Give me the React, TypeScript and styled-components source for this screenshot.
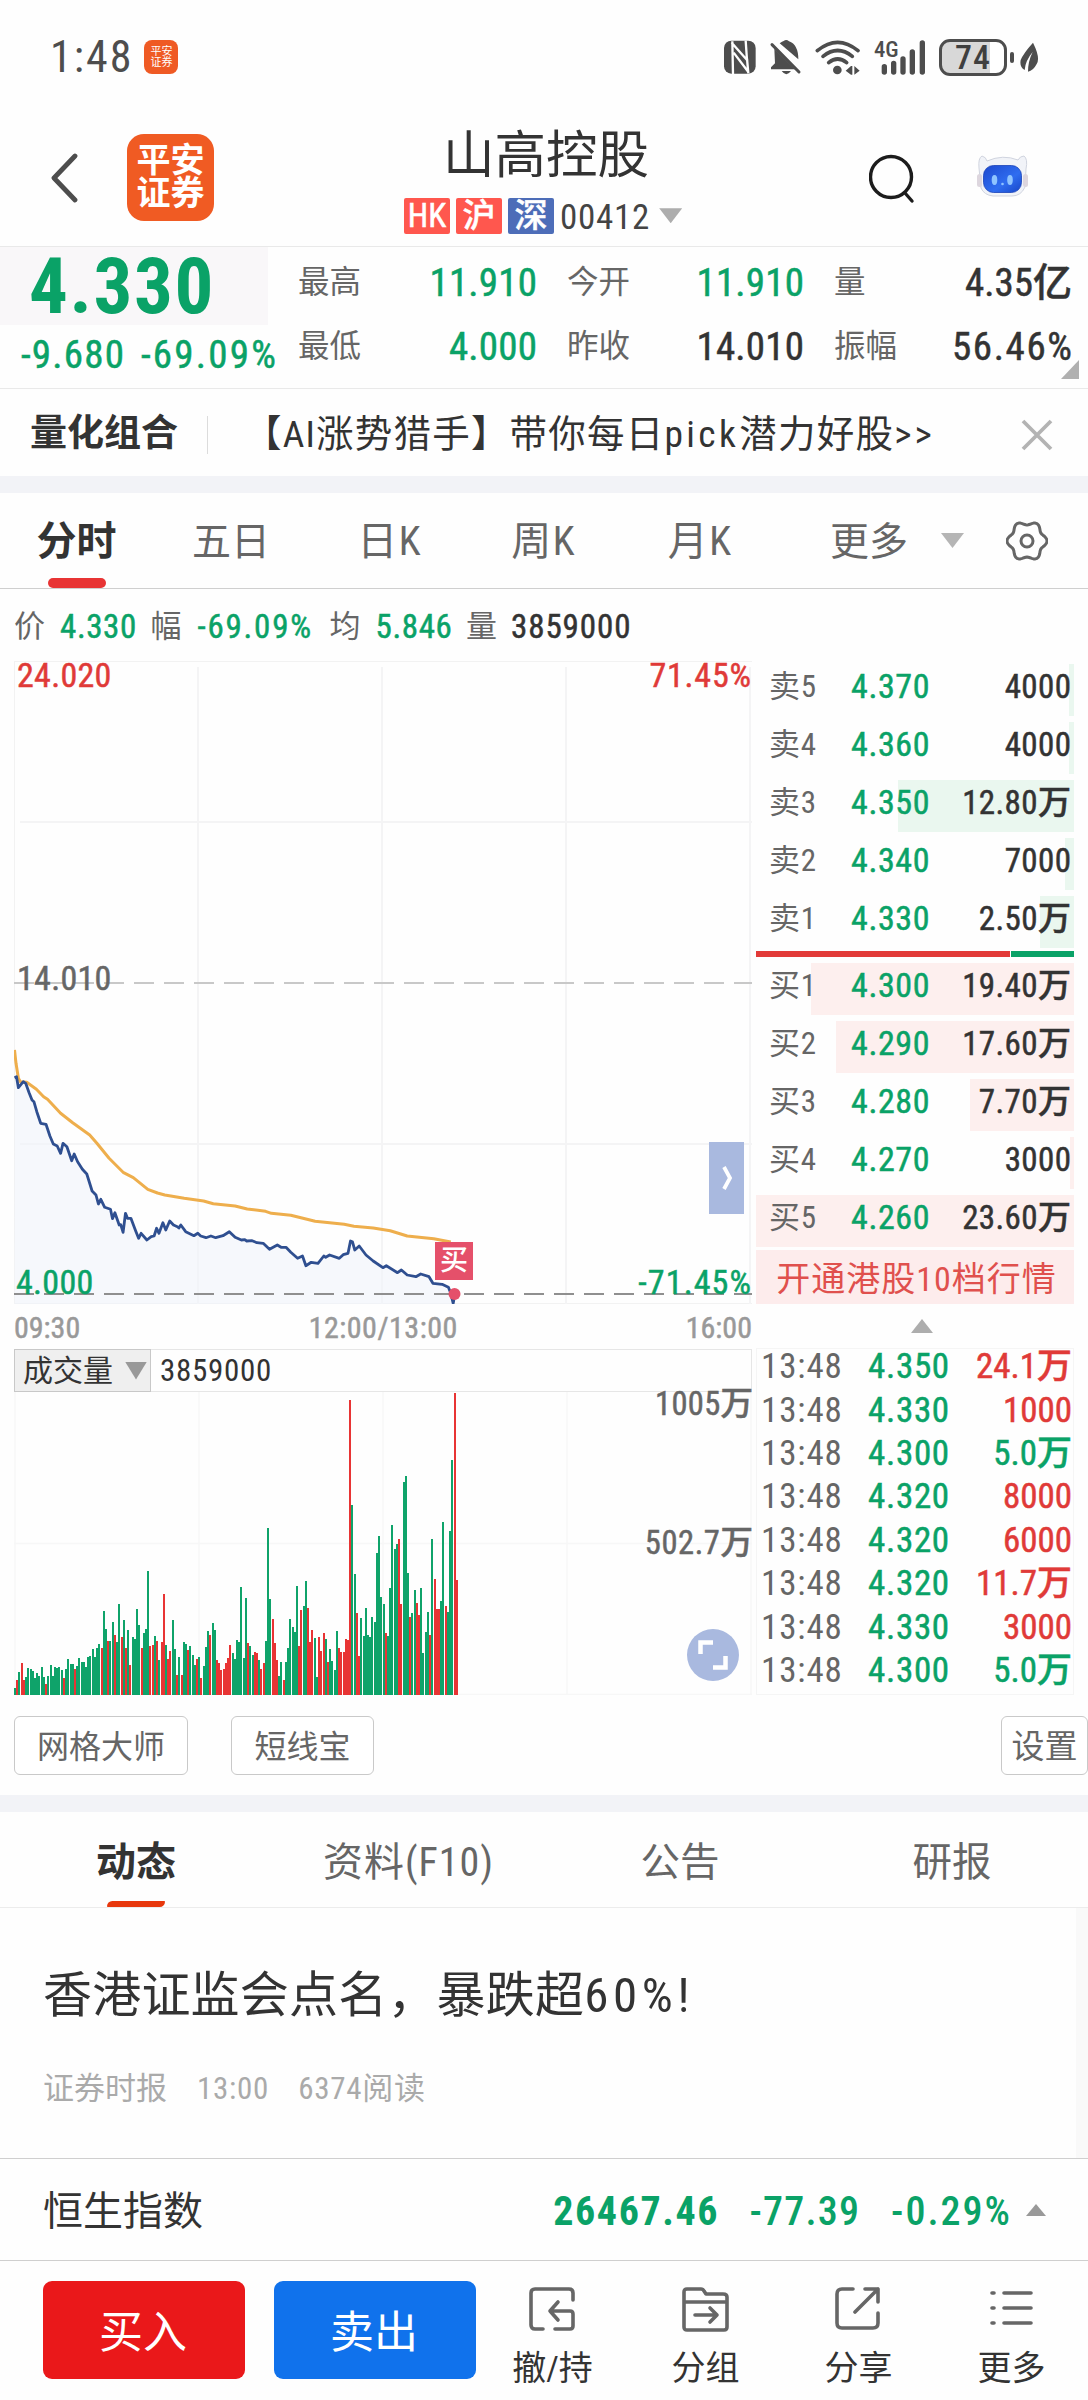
import React from 'react';
import styled, { createGlobalStyle } from 'styled-components';

const GREEN = '#0aa267';
const RED = '#e03a38';
const INK = '#333';
const GREY = '#666';

const GlobalStyle = createGlobalStyle`
  *, *::before, *::after { box-sizing: border-box; }
  body {
    margin: 0;
    background: #fff;
    color: ${INK};
    font-family: "Roboto Condensed", Roboto, "Noto Sans CJK SC", sans-serif;
    font-stretch: 75%;
  }
`;

const Screen = styled.main`
  display: flex;
  flex-direction: column;
  width: 1088px;
  height: 2400px;
  overflow: hidden;
  background: #fefefe;
`;

const Text = styled.span<{ $size: number; $color?: string; $weight?: number; $ls?: number; $w?: number; $ml?: string; $drop?: number }>`
  display: inline-block;
  flex: none;
  font-size: ${p => p.$size}px;
  line-height: 1.2;
  color: ${p => p.$color || INK};
  font-weight: ${p => p.$weight || 400};
  -webkit-text-stroke: ${p => (p.$weight === 450 ? '0.5px' : '0')};
  letter-spacing: ${p => p.$ls || 0}px;
  margin-right: ${p => -(p.$ls || 0)}px;
  margin-left: ${p => p.$ml || 0};
  padding-top: ${p => p.$drop || 0}px;
  width: ${p => (p.$w ? `${p.$w}px` : 'auto')};
  white-space: nowrap;
`;

const Wide = styled.span<{ $ls: number }>`
  letter-spacing: ${p => p.$ls}px;
`;

const Band = styled.div`
  height: 17px;
  flex: none;
  background: #f2f3f7;
`;

/* ---------- status bar ---------- */

const StatusBar = styled.header`
  display: flex;
  align-items: center;
  flex: none;
  height: 114px;
  padding: 0 49px 0 50px;
`;

const MiniLogo = styled.span`
  display: grid;
  place-content: center;
  width: 34px;
  height: 34px;
  margin-left: 13px;
  border-radius: 8px;
  background: #ef5a24;
  color: #fff;
  font-size: 11px;
  line-height: 11px;
`;

const StatusIcons = styled.div`
  display: flex;
  align-items: center;
  margin-left: auto;
`;

const Battery = styled.span`
  display: flex;
  align-items: center;
  justify-content: center;
  width: 68px;
  height: 37px;
  border: 3px solid #4d4d4d;
  border-radius: 11px;
  background: linear-gradient(90deg, #d8d8d8 78%, #fff 78%);
  color: #3f3f3f;
  font-size: 34px;
  font-weight: 500;
  line-height: 31px;
  letter-spacing: 1px;
`;

const BatteryTip = styled.span`
  width: 4px;
  height: 11px;
  margin: 0 6px 0 3px;
  border-radius: 2px;
  background: #4d4d4d;
`;

/* ---------- title bar ---------- */

const TitleBar = styled.div`
  display: flex;
  flex: none;
  height: 132px;
  padding-left: 50px;
`;

const BackSlot = styled.div`
  width: 77px;
  padding-top: 39px;
`;

const Logo = styled.div`
  display: grid;
  place-content: center;
  width: 87px;
  height: 87px;
  margin-top: 20px;
  border-radius: 17px;
  background: #f05b23;
  color: #fff;
  font-size: 34px;
  font-weight: 700;
  line-height: 33px;
  padding-bottom: 2px;
`;

const TitleBlock = styled.div`
  display: flex;
  flex-direction: column;
  align-items: center;
  width: 284px;
  margin-left: 190px;
  padding-top: 11px;
`;

const CodeRow = styled.div`
  display: flex;
  align-items: center;
  align-self: flex-start;
  height: 36px;
  margin-top: 11px;
`;

const Tag = styled.span<{ $bg: string }>`
  width: 46px;
  height: 36px;
  margin-right: 6px;
  border-radius: 2px;
  background: ${p => p.$bg};
  color: #fff;
  font-size: 33px;
  line-height: 35px;
  text-align: center;
  font-weight: 450;
  -webkit-text-stroke: 0.5px;
`;

const Arrow = styled.span<{ $w: number; $h: number; $up?: boolean; $color?: string; $m?: string }>`
  flex: none;
  width: ${p => p.$w}px;
  height: ${p => p.$h}px;
  margin: ${p => p.$m || 0};
  background: ${p => p.$color || '#adadad'};
  clip-path: ${p => (p.$up ? 'polygon(50% 0, 100% 100%, 0 100%)' : 'polygon(0 0, 100% 0, 50% 100%)')};
`;

const TitleActions = styled.div`
  display: flex;
  align-items: flex-start;
  gap: 61px;
  width: 219px;
  margin-left: auto;
  padding-top: 40px;
`;

/* ---------- quote ---------- */

const Quote = styled.section`
  display: flex;
  flex: none;
  height: 142px;
  border-top: 1px solid #e9e9e9;
`;

const PriceCol = styled.div`
  width: 298px;
`;

const BigPrice = styled.div`
  display: flex;
  align-items: center;
  width: 268px;
  height: 78px;
  padding: 3px 0 0 29px;
  background: #f9f7f9;
`;

const ChangeRow = styled.div`
  display: flex;
  align-items: center;
  gap: 17px;
  height: 61px;
  padding-left: 21px;
`;

const StatGrid = styled.div`
  display: grid;
  grid-template-columns: 239px 237px 238px;
  column-gap: 30px;
  grid-template-rows: 64px 64px;
  padding-top: 4px;
`;

const Stat = styled.div`
  display: flex;
  align-items: center;
  justify-content: space-between;
`;

const QuoteBody = styled.div`
  position: relative;
  flex: 1;
`;

const Corner = styled.span`
  position: absolute;
  right: 9px;
  bottom: 9px;
  width: 18px;
  height: 19px;
  background: #b0b0b0;
  clip-path: polygon(100% 0, 100% 100%, 0 100%);
`;

/* ---------- banner ---------- */

const Banner = styled.section`
  display: flex;
  align-items: center;
  flex: none;
  height: 88px;
  padding: 4px 35px 0 30px;
  border-top: 1px solid #e9e9e9;
`;

const Rule = styled.i`
  width: 1px;
  height: 38px;
  margin: 0 36px 0 29px;
  background: #dcdcdc;
`;

const Close = styled.svg`
  margin-left: auto;
`;

/* ---------- chart tabs ---------- */

const Tabs = styled.nav`
  display: flex;
  flex: none;
  height: 96px;
  border-bottom: 1px solid #cfcfcf;
`;

const Tab = styled.div<{ $w: number }>`
  display: flex;
  flex-direction: column;
  align-items: center;
  width: ${p => p.$w}px;
  height: 95px;
  padding-top: 25px;
`;

const TabMark = styled.i`
  width: 58px;
  height: 10px;
  margin-top: auto;
  border-radius: 5px;
  background: #e83434;
`;

const TabTools = styled.div`
  display: flex;
  align-items: center;
  height: 95px;
`;

const InfoRow = styled.div`
  display: flex;
  align-items: center;
  flex: none;
  height: 72px;
  padding: 4px 0 0 14px;
`;

/* ---------- market body ---------- */

const Market = styled.section`
  display: grid;
  grid-template-columns: 738px 318px;
  column-gap: 4px;
  flex: none;
  height: 1034px;
  padding-left: 14px;
`;

const ChartCol = styled.div`
  display: flex;
  flex-direction: column;
`;

const Plot = styled.div<{ $h: number }>`
  position: relative;
  height: ${p => p.$h}px;
  svg { display: block; }
`;

const AxisLabel = styled(Text)<{ $top: number; $right?: number; $left?: number }>`
  position: absolute;
  top: ${p => p.$top}px;
  ${p => (p.$right !== undefined ? `right: ${p.$right}px;` : `left: ${p.$left}px;`)}
`;

const SideHandle = styled.div`
  position: absolute;
  left: 695px;
  top: 481px;
  display: grid;
  place-items: center;
  width: 35px;
  height: 72px;
  background: #a9b9df;
`;

const BuyFlag = styled.div`
  position: absolute;
  left: 421px;
  top: 581px;
  width: 38px;
  height: 38px;
  background: #e5506a;
  color: #fff;
  font-size: 28px;
  font-weight: 450;
  line-height: 37px;
  text-align: center;
`;

const TimeAxis = styled.div`
  display: flex;
  justify-content: space-between;
  align-items: center;
  height: 45px;
  padding-top: 2px;
`;

const VolumeBar = styled.div`
  display: flex;
  align-items: center;
  height: 43px;
  border: 1px solid #e6e6e6;
`;

const IndicatorSelect = styled.div`
  display: flex;
  align-items: center;
  gap: 12px;
  width: 137px;
  height: 43px;
  margin: -1px 9px -1px -1px;
  padding: 0 0 0 8px;
  border: 1px solid #c8c8c8;
  background: #efefef;
`;

const Expand = styled.div`
  position: absolute;
  left: 673px;
  top: 237px;
  display: grid;
  place-items: center;
  width: 52px;
  height: 52px;
  border-radius: 50%;
  background: #a9b9df;
`;

/* ---------- order book ---------- */

const BookCol = styled.div`
  display: flex;
  flex-direction: column;
  padding-top: 3px;
`;

const Side = styled.div`
  display: flex;
  flex-direction: column;
  gap: 6px;
`;

const Level = styled.div<{ $fill: number; $tint: string }>`
  display: grid;
  grid-template-columns: 82px 82px 138px;
  align-items: center;
  height: 52px;
  padding: 0 0 7px 13px;
  background: linear-gradient(${p => p.$tint}, ${p => p.$tint}) right / ${p => p.$fill}px 100% no-repeat;
  & > :last-child { justify-self: end; }
`;

const Ratio = styled.div`
  display: grid;
  grid-template-columns: 254px 1fr;
  gap: 1px;
  height: 6px;
  margin: 3px 0 6px;
  & > :first-child { background: #e23a38; }
  & > :last-child { background: ${GREEN}; }
`;

const OpenLevels = styled.div`
  display: flex;
  align-items: center;
  justify-content: center;
  height: 54px;
  margin-top: 3px;
  padding: 4px 0 0 2px;
  background: #fdecec;
`;

const Collapse = styled.div`
  display: flex;
  justify-content: center;
  align-items: center;
  height: 44px;
  padding-left: 14px;
`;

const Ticks = styled.div`
  display: flex;
  flex-direction: column;
  height: 347px;
  border: 1px solid #f5f5f5;
  padding: 0 1px 0 4px;
`;

const Tick = styled.div`
  display: grid;
  grid-template-columns: 107px 100px 1fr;
  align-items: center;
  align-content: center;
  flex: none;
  height: 43.4px;
  padding-bottom: 7px;
  & > :last-child { justify-self: end; }
`;

/* ---------- tools ---------- */

const Tools = styled.div`
  display: flex;
  align-items: center;
  flex: none;
  height: 100px;
  padding-left: 14px;
`;

const ToolButton = styled.button<{ $w: number; $ml?: string; $size?: number }>`
  width: ${p => p.$w}px;
  height: 59px;
  margin-left: ${p => p.$ml || 0};
  padding: 0 0 3px;
  border: 1px solid #c9c9c9;
  border-radius: 6px;
  background: #fff;
  color: ${GREY};
  font-family: inherit;
  font-size: ${p => p.$size || 32}px;
  white-space: nowrap;
`;

/* ---------- news ---------- */

const NewsTabs = styled.nav`
  display: grid;
  grid-template-columns: repeat(4, 272px);
  flex: none;
  height: 96px;
  border-bottom: 1px solid #ececec;
`;

const NewsTab = styled.div`
  display: flex;
  flex-direction: column;
  align-items: center;
  padding-top: 27px;
`;

const NewsMark = styled.i`
  width: 58px;
  height: 6px;
  margin-top: auto;
  border-radius: 7px 1px 7px 1px;
  background: #e8380d;
`;

const Article = styled.article`
  display: flex;
  flex-direction: column;
  flex: none;
  height: 250px;
  padding: 59px 0 0 43px;
  border-right: 12px solid #f9f9f9;
`;

const Meta = styled.div`
  display: flex;
  gap: 30px;
  margin-top: 44px;
`;

/* ---------- footer ---------- */

const IndexRow = styled.section`
  display: flex;
  align-items: center;
  flex: none;
  height: 102px;
  padding: 5px 42px 0 43px;
  border-top: 1px solid #cfcfcf;
`;

const Footer = styled.footer`
  display: flex;
  flex: 1;
  padding: 20px 0 0 43px;
  border-top: 1px solid #cfcfcf;
`;

const TradeGroup = styled.div`
  display: flex;
  gap: 29px;
`;

const Trade = styled.button<{ $bg: string }>`
  width: 202px;
  height: 98px;
  padding: 0 2px 2px 0;
  border: 0;
  border-radius: 9px;
  background: ${p => p.$bg};
  color: #fff;
  font-family: inherit;
  font-size: 44px;
`;

const Action = styled.div`
  display: flex;
  flex-direction: column;
  align-items: center;
  width: 153px;
  padding-top: 6px;
`;

const ActionIcon = styled.svg`
  fill: none;
  stroke: #666;
  stroke-width: 3.6;
  stroke-linecap: round;
  stroke-linejoin: round;
  margin-bottom: 16px;
`;

/* ---------- data ---------- */

const stats: [string, string, string, number][] = [
  ['最高', '11.910', GREEN, 0.2], ['今开', '11.910', GREEN, 0.2], ['量', '4.35亿', INK, 0],
  ['最低', '4.000', GREEN, 0.2], ['昨收', '14.010', INK, 0.2], ['振幅', '56.46%', INK, 1.6],
];

const sells: [string, string, string, number][] = [
  ['卖5', '4.370', '4000', 5], ['卖4', '4.360', '4000', 5], ['卖3', '4.350', '12.80万', 176],
  ['卖2', '4.340', '7000', 9], ['卖1', '4.330', '2.50万', 34],
];

const buys: [string, string, string, number][] = [
  ['买1', '4.300', '19.40万', 263], ['买2', '4.290', '17.60万', 238], ['买3', '4.280', '7.70万', 104],
  ['买4', '4.270', '3000', 4], ['买5', '4.260', '23.60万', 318],
];

const ticks: [string, string, boolean][] = [
  ['4.350', '24.1万', true], ['4.330', '1000', true], ['4.300', '5.0万', false], ['4.320', '8000', true],
  ['4.320', '6000', true], ['4.320', '11.7万', true], ['4.330', '3000', true], ['4.300', '5.0万', false],
];

const price = '30,233 34,230 38,263 48,245 53,250 60,278 66,300 70,305 76,335 84,370 95,373 103,408 110,432 118,438 125,460 130,430 138,440 148,482 153,462 160,485 170,508 179,522 190,573 198,585 203,612 208,598 216,622 228,628 232,656 237,638 246,675 249,674 254,697 259,640 263,655 270,655 280,693 286,715 291,700 303,720 312,710 318,708 323,685 328,700 336,668 342,690 350,663 358,675 366,680 369,684 373,675 383,695 400,707 408,700 414,708 425,713 435,708 445,713 460,707 473,695 485,712 498,720 505,719 509,723 520,722 530,728 543,730 556,748 572,735 580,742 590,742 600,757 614,775 624,768 631,797 642,787 656,790 668,768 672,772 680,765 700,775 708,764 718,760 723,723 727,725 732,750 741,738 755,765 770,783 790,803 797,797 820,818 828,810 840,825 858,830 868,822 885,830 893,850 912,853 925,862 930,880 935,910 938,885';
const average = '30,150 33,190 38,235 42,245 55,247 75,268 90,290 98,298 125,340 150,368 185,405 200,430 225,475 255,518 275,533 305,568 325,579 340,585 380,595 420,603 440,611 485,618 510,627 548,634 560,640 600,646 650,664 710,673 730,679 770,684 805,692 840,708 895,716 930,726';

const toPlot = (s: string) =>
  s.split(' ').map(p => {
    const [x, y] = p.split(',').map(Number);
    return `${(x / 2.063).toFixed(1)},${(1000 + y / 3).toFixed(1)}`;
  }).join(' ');

const FLOOR = 1065;
const volume = (
  '1045g 1020r 996g 969r 1020r 1011g 984g 987g 993g 1014g 999g 1008g 981g 1011g 1032r 1008g 975g 1008g 981g 984g ' +
  '981g 990g 1014r 987g 957g 972g 972g 987r 978g 954g 966g 966g 981g 951g 948g 927g 951g 924g 912g 924r ' +
  '813g 867g 903r 903g 846g 885r 906g 792g 891r 840g 924r 870g 975r 891g 897g 807g 855g 924r 879g 867g ' +
  '693g 918r 915r 888g 903r 960g 906r 762r 915g 957r 933r 840g 927g 1005r 951g 1005r 906g 912g 930r 918g ' +
  '945g 975g 957r 951g 1014r 978g 921g 873g 885r 849g 870g 960r 969r 990r 987r 969r 954r 915r 939g 957g ' +
  '900g 906g 741g 953g 774g 909r 918g 945g 936r 939r 960g 987r 969r 903g 564g 777g 837r 909r 960r 1008g ' +
  '966g 1020r 966g 924g 837g 861g 876g 738g 918r 810r 798g 723g 804r 906r 870r 894g 1011g 891r 933r 879r ' +
  '897g 966r 927g 963g 990g 873g 924r 936r 936r 897r 900r 180r 495g 702g 819r 948r 834g 888g 804g 885g ' +
  '891g 831g 846g 639g 588g 771g 792g 879r 888g 744g 555g 627g 612g 597r 792r 426g 408g 699g 831r 819g ' +
  '750g 789r 825r 744g 939g 876g 816g 885r 597g 717r 807r 807r 783g 546g 798r 816g 573g 360g 159r 720r'
).split(' ').map(s => ({ h: (FLOOR - parseInt(s, 10)) / 3, up: s.endsWith('r') }));

const gear = Array.from({ length: 73 }, (_, i) => {
  const a = (i / 72) * Math.PI * 2;
  const r = 18 + 2 * Math.cos(6 * a);
  return `${(21 + r * Math.cos(a)).toFixed(1)},${(21 + r * Math.sin(a)).toFixed(1)}`;
}).join(' ');

/* ---------- parts ---------- */

const StatusGlyphs = () => (
  <svg width="216" height="38" viewBox="36 50 648 114" fill="#4d4d4d">
    <rect x="39" y="58" width="95" height="99" rx="22" />
    <path d="M64 60 L66 158 M62 64 L110 118 M68 94 L112 152 M104 58 L108 116 M108 112 L112 156" stroke="#fefefe" strokeWidth="7" fill="none" />
    <path d="M190 82 L252 144 H180 V138 L192 126 Z M206 66 Q214 60 218 59 Q226 53 234 60 Q262 70 262 114 Z" />
    <path d="M183 70 L264 152" stroke="#4d4d4d" strokeWidth="9" strokeLinecap="round" />
    <path d="M212 149 H240 Q226 168 212 149 Z" />
    <g fill="none" stroke="#4d4d4d" strokeWidth="11" strokeLinecap="round">
      <path d="M319 88 Q380 38 441 88" />
      <path d="M336 105 Q380 70 424 105" />
      <path d="M353 124 Q380 102 407 124" />
    </g>
    <circle cx="379" cy="146" r="13" />
    <path d="M404 148 L420 134 V160 Z M446 148 L430 134 V160 Z M420 134 h4 v26 h-4z" />
    <g stroke="#4d4d4d" strokeWidth="16" strokeLinecap="round">
      <path d="M520 136 V152 M548 126 V152 M576 113 V152 M604 92 V152 M634 65 V152" />
    </g>
    <text x="489" y="107" fontSize="66" fontWeight="500" textLength="74" lengthAdjust="spacingAndGlyphs">4G</text>
  </svg>
);

const Robot = () => (
  <svg width="54" height="44" viewBox="0 0 54 44">
    <defs>
      <linearGradient id="face" x1="0" y1="0" x2="1" y2="1">
        <stop offset="0" stopColor="#1d49cf" />
        <stop offset=".6" stopColor="#2f6df0" />
        <stop offset="1" stopColor="#1746c8" />
      </linearGradient>
    </defs>
    <path d="M3 14 Q2 4 6 2 Q10 3 11 7 Q27 0 42 6 Q44 2 48 2 Q52 5 50 15 L49 33 Q45 42 36 42 H17 Q8 41 5 34 Z" fill="#f1f3f8" stroke="#d0d4df" strokeWidth="1" />
    <rect x="1" y="20" width="5" height="13" rx="2.5" fill="#ddd6de" />
    <rect x="47" y="20" width="5" height="13" rx="2.5" fill="#ddd6de" />
    <rect x="7.5" y="11.5" width="38" height="27" rx="10" fill="url(#face)" stroke="#1b43b8" strokeWidth=".8" />
    <ellipse cx="18.500" cy="26" rx="2.8" ry="5" fill="#8fc4ff" />
    <ellipse cx="34" cy="26" rx="2.8" ry="5" fill="#8fc4ff" />
    <circle cx="26.500" cy="30" r="1.300" fill="#8fc4ff" />
  </svg>
);

const BookLevel = ({ row, tint }: { row: [string, string, string, number]; tint: string }) => (
  <Level $fill={row[3]} $tint={tint}>
    <Text $size={31} $color={GREY} $ls={0.8}>{row[0]}</Text>
    <Text $size={34} $color={GREEN} $weight={450} $ls={0.6}>{row[1]}</Text>
    <Text $size={33} $weight={450} $ls={0.4}>{row[2]}</Text>
  </Level>
);

const gridX = [198, 382, 566, 750];

const PricePlot = () => (
  <Plot $h={643}>
    <svg width="738" height="643" viewBox="14 661 738 643">
      <path d="M14 661.500 H752 M14.500 661 V1304 M14 1303.500 H752" stroke="#f2f2f2" />
      <path d={gridX.map(x => `M${x} 667 V1304`).join(' ') + ' M20 822 H752 M20 1144 H752'} stroke="#f4f4f5" strokeWidth="2" />
      <polygon points={`${toPlot(price)} 453,1304 14.500,1304`} fill="#f0f4fa" opacity=".6" />
      <path d="M14 983 H752" stroke="#c8c8c8" strokeWidth="2" strokeDasharray="20 10" />
      <path d="M14 1294 H752" stroke="#8f8f8f" strokeWidth="2" strokeDasharray="20 10" />
      <polyline points={toPlot(average)} fill="none" stroke="#eeae4c" strokeWidth="3" strokeLinejoin="round" />
      <polyline points={toPlot(price)} fill="none" stroke="#2f4f90" strokeWidth="2.800" strokeLinejoin="round" />
      <circle cx="454.500" cy="1294" r="6" fill="#e5506a" />
    </svg>
    <AxisLabel $size={34} $color={RED} $weight={450} $top={-6} $left={3} $ls={0.3}>24.020</AxisLabel>
    <AxisLabel $size={34} $color={RED} $weight={450} $top={-6} $right={1} $ls={0.8}>71.45%</AxisLabel>
    <AxisLabel $size={34} $color={GREY} $weight={450} $top={297} $left={3} $ls={0.3}>14.010</AxisLabel>
    <AxisLabel $size={34} $color={GREEN} $weight={450} $top={601} $left={2} $ls={0.3}>4.000</AxisLabel>
    <AxisLabel $size={34} $color={GREEN} $weight={450} $top={601} $right={1} $ls={1.1}>-71.45%</AxisLabel>
    <SideHandle>
      <svg width="12" height="26" viewBox="0 0 12 26"><path d="M3 2 L9 13 L3 24" fill="none" stroke="#fff" strokeWidth="3.800" /></svg>
    </SideHandle>
    <BuyFlag>买</BuyFlag>
  </Plot>
);

const VolumePlot = () => (
  <Plot $h={303}>
    <svg width="738" height="303" viewBox="14 1392 738 303">
      <path d={gridX.map(x => `M${x + 1} 1392 V1695`).join(' ') + ' M14 1543.500 H752 M14 1694.500 H752 M15 1392 V1695'} stroke="#f7f7f7" strokeWidth="1.500" />
      {volume.map((v, i) => (
        <rect key={i} x={Math.round(14 + i * 2.22)} y={1695 - v.h} width="2" height={v.h} fill={v.up ? '#e83434' : '#0fa36a'} shapeRendering="crispEdges" />
      ))}
    </svg>
    <AxisLabel $size={32.5} $color={GREY} $weight={450} $top={-7} $right={-1} $ls={0.3}>1005万</AxisLabel>
    <AxisLabel $size={32.5} $color={GREY} $weight={450} $top={132} $right={-1} $ls={0.6}>502.7万</AxisLabel>
    <Expand>
      <svg width="30" height="30" viewBox="0 0 30 30"><path d="M2.500 14 V2.500 H15 M27.500 16 V27.500 H15" fill="none" stroke="#fff" strokeWidth="4.500" /></svg>
    </Expand>
  </Plot>
);

export default function App() {
  return (
    <Screen>
      <GlobalStyle />
      <StatusBar>
        <Text $size={44} $color="#4d4d4d" $ls={2}>1:48</Text>
        <MiniLogo><span>平安</span><span>证券</span></MiniLogo>
        <StatusIcons>
          <StatusGlyphs />
          <Battery>74</Battery>
          <BatteryTip />
          <svg width="19" height="30" viewBox="928 62 57 90" fill="#4d4d4d">
            <path d="M967 64 Q990 110 978 128 Q968 148 952 151 Q952 120 966 92 Q944 118 942 146 Q926 138 930 116 Q938 96 967 64 Z" />
          </svg>
        </StatusIcons>
      </StatusBar>

      <TitleBar>
        <BackSlot>
          <svg width="28" height="50" viewBox="0 0 28 50"><path d="M25 3 L4 25 L25 47" fill="none" stroke="#4d4d4d" strokeWidth="4.800" strokeLinecap="round" strokeLinejoin="round" /></svg>
        </BackSlot>
        <Logo><span>平安<br />证券</span></Logo>
        <TitleBlock>
          <Text $size={51.5}>山高控股</Text>
          <CodeRow>
            <Tag $bg="#ff574e">HK</Tag>
            <Tag $bg="#ff574e">沪</Tag>
            <Tag $bg="#4d6db8">深</Tag>
            <Text $size={35} $color="#444" $ls={0.7} $drop={5}>00412</Text>
            <Arrow $w={23} $h={15} $m="0 0 0 10px" />
          </CodeRow>
        </TitleBlock>
        <TitleActions>
          <svg width="46" height="50" viewBox="0 0 46 50" fill="none" stroke="#1c1c1c" strokeWidth="3.400" strokeLinecap="round"><circle cx="22" cy="23" r="20.500" /><path d="M36 39 L43 47" /></svg>
          <Robot />
        </TitleActions>
      </TitleBar>

      <Quote>
        <PriceCol>
          <BigPrice><Text $size={77} $color={GREEN} $weight={700} $ls={1.6}>4.330</Text></BigPrice>
          <ChangeRow>
            <Text $size={39} $color={GREEN} $weight={450} $ls={1.2}>-9.680</Text>
            <Text $size={39} $color={GREEN} $weight={450} $ls={2.2}>-69.09%</Text>
          </ChangeRow>
        </PriceCol>
        <QuoteBody>
          <StatGrid>
            {stats.map(([k, v, c, ls]) => (
              <Stat key={k}>
                <Text $size={31.5} $color={GREY}>{k}</Text>
                <Text $size={39} $color={c} $weight={450} $ls={ls}>{v}</Text>
              </Stat>
            ))}
          </StatGrid>
          <Corner />
        </QuoteBody>
      </Quote>

      <Banner>
        <Text $size={37} $weight={700}>量化组合</Text>
        <Rule />
        <Text $size={37.5} $ls={1.2}>【AI涨势猎手】带你每日<Wide $ls={3.4}>pick</Wide>潜力好股<Wide $ls={3}>&gt;&gt;</Wide></Text>
        <Close width="32" height="32" viewBox="0 0 32 32"><path d="M2 2 L30 30 M30 2 L2 30" stroke="#b3b3b3" strokeWidth="3.800" /></Close>
      </Banner>
      <Band />

      <Tabs>
        <Tab $w={153}><Text $size={40} $weight={700}>分时</Text><TabMark /></Tab>
        <Tab $w={156}><Text $size={39} $color={GREY} $drop={1}>五日</Text></Tab>
        <Tab $w={160}><Text $size={40} $color={GREY} $ls={1.5}>日K</Text></Tab>
        <Tab $w={148}><Text $size={40} $color={GREY} $ls={1.5}>周K</Text></Tab>
        <Tab $w={165}><Text $size={40} $color={GREY} $ls={1.5}>月K</Text></Tab>
        <Tab $w={174}><Text $size={39} $color={GREY} $drop={1}>更多</Text></Tab>
        <TabTools>
          <Arrow $w={23} $h={15} $color="#b5b5b5" $m="0 42px 0 -15px" />
          <svg width="42" height="42" viewBox="0 0 42 42" fill="none" stroke="#666" strokeWidth="3"><polygon points={gear} strokeLinejoin="round" /><circle cx="21" cy="21" r="6" /></svg>
        </TabTools>
      </Tabs>

      <InfoRow>
        <Text $size={31} $color={GREY} $w={46}>价</Text>
        <Text $size={33} $color={GREEN} $weight={450} $w={91} $ls={0.6}>4.330</Text>
        <Text $size={31} $color={GREY} $w={47}>幅</Text>
        <Text $size={33} $color={GREEN} $weight={450} $ls={1.8} $w={134}>-69.09%</Text>
        <Text $size={31} $color={GREY} $w={46}>均</Text>
        <Text $size={33} $color={GREEN} $weight={450} $w={91} $ls={0.6}>5.846</Text>
        <Text $size={31} $color={GREY} $w={45}>量</Text>
        <Text $size={33} $weight={450} $ls={0.9}>3859000</Text>
      </InfoRow>

      <Market>
        <ChartCol>
          <PricePlot />
          <TimeAxis>
            <Text $size={30} $color="#999" $weight={450}>09:30</Text>
            <Text $size={30} $color="#999" $weight={450} $ls={0.5}>12:00/13:00</Text>
            <Text $size={30} $color="#999" $weight={450}>16:00</Text>
          </TimeAxis>
          <VolumeBar>
            <IndicatorSelect>
              <Text $size={30}>成交量</Text>
              <Arrow $w={22} $h={18} $color="#999" />
            </IndicatorSelect>
            <Text $size={31} $ls={0.7} $drop={1}>3859000</Text>
          </VolumeBar>
          <VolumePlot />
        </ChartCol>
        <BookCol>
          <Side>{sells.map(r => <BookLevel key={r[0]} row={r} tint="#eaf7ef" />)}</Side>
          <Ratio><i /><i /></Ratio>
          <Side>{buys.map(r => <BookLevel key={r[0]} row={r} tint="#fdefee" />)}</Side>
          <OpenLevels><Text $size={34} $color="#e0504d" $ls={1}>开通港股10档行情</Text></OpenLevels>
          <Collapse><Arrow $w={22} $h={14} $up /></Collapse>
          <Ticks>
            {ticks.map(([p, v, up], i) => (
              <Tick key={i}>
                <Text $size={35} $color={GREY} $ls={0.9}>13:48</Text>
                <Text $size={35} $color={GREEN} $weight={450} $ls={0.7}>{p}</Text>
                <Text $size={35} $color={up ? RED : GREEN} $weight={450}>{v}</Text>
              </Tick>
            ))}
          </Ticks>
        </BookCol>
      </Market>

      <Tools>
        <ToolButton $w={174}>网格大师</ToolButton>
        <ToolButton $w={143} $ml="43px">短线宝</ToolButton>
        <ToolButton $w={87} $ml="auto" $size={33}>设置</ToolButton>
      </Tools>
      <Band />

      <NewsTabs>
        <NewsTab><Text $size={40} $weight={700}>动态</Text><NewsMark /></NewsTab>
        <NewsTab><Text $size={40} $color={GREY} $ls={1}>资料(F10)</Text></NewsTab>
        <NewsTab><Text $size={39.5} $color={GREY}>公告</Text></NewsTab>
        <NewsTab><Text $size={39.5} $color={GREY}>研报</Text></NewsTab>
      </NewsTabs>
      <Article>
        <Text $size={49} $ls={0.2}>香港证监会点名，暴跌超<Wide $ls={4.6}>60%!</Wide></Text>
        <Meta>
          <Text $size={31} $color="#aaa">证券时报</Text>
          <Text $size={31} $color="#aaa" $ls={0.7}>13:00</Text>
          <Text $size={31} $color="#aaa" $ls={0.7}>6374阅读</Text>
        </Meta>
      </Article>

      <IndexRow>
        <Text $size={40}>恒生指数</Text>
        <Text $size={40} $color={GREEN} $weight={700} $ls={1.6} $ml="auto">26467.46</Text>
        <Text $size={40} $color={GREEN} $weight={500} $ls={1.2} $ml="32px">-77.39</Text>
        <Text $size={40} $color={GREEN} $weight={500} $ls={2} $ml="32px">-0.29%</Text>
        <Arrow $w={20} $h={12} $up $color="#999" $m="0 0 4px 16px" />
      </IndexRow>

      <Footer>
        <TradeGroup>
          <Trade $bg="#ea181a">买入</Trade>
          <Trade $bg="#1072ec">卖出</Trade>
        </TradeGroup>
        <Action>
          <ActionIcon width="47" height="45" viewBox="0 0 47 45"><path d="M14 42 H6 Q2 42 2 38 V6 Q2 2 6 2 H40 Q44 2 44 6 V13 M26 42 H41 Q44 42 44 39 V27 Q44 24 41 24 H21 M29 15 L21 24 L29 33" /></ActionIcon>
          <Text $size={34}>撤/持</Text>
        </Action>
        <Action>
          <ActionIcon width="47" height="45" viewBox="0 0 47 45"><path d="M2 5 Q2 2 5 2 H19 Q21 2 22 4 L24 7 H41 Q45 7 45 10 V40 Q45 43 42 43 H5 Q2 43 2 40 Z M2 15 H45 M13 28 H35 M28 21 L35 28 L28 35" /></ActionIcon>
          <Text $size={34}>分组</Text>
        </Action>
        <Action>
          <ActionIcon width="47" height="45" viewBox="0 0 47 45"><path d="M18 2 H7 Q2 2 2 7 V36 Q2 41 7 41 H38 Q43 41 43 36 V26 M30 2 H43 V15 M43 2 L20 25" /></ActionIcon>
          <Text $size={34}>分享</Text>
        </Action>
        <Action>
          <ActionIcon width="47" height="45" viewBox="0 0 47 45"><path d="M4 6 H6 M16 6 H43 M4 21 H6 M16 21 H43 M4 36 H6 M16 36 H43" /></ActionIcon>
          <Text $size={34}>更多</Text>
        </Action>
      </Footer>
    </Screen>
  );
}
